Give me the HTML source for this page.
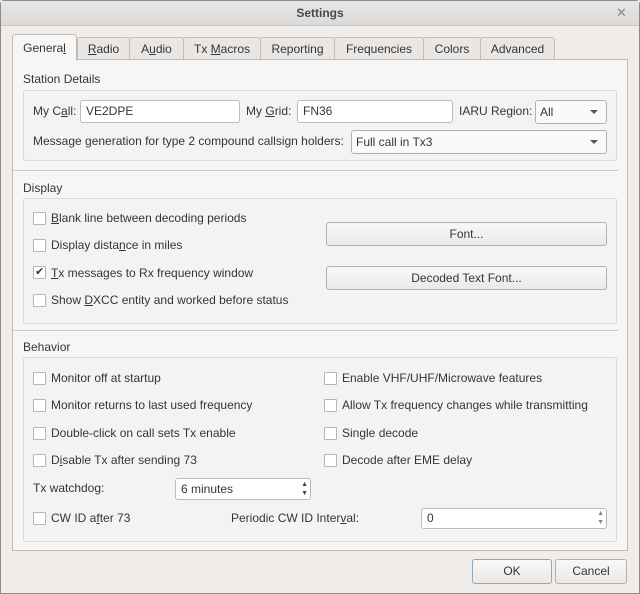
<!DOCTYPE html>
<html><head><style>
*{box-sizing:border-box;margin:0;padding:0}
body{width:640px;height:594px;background:#efecea;font-family:"Liberation Sans","DejaVu Sans",sans-serif;font-size:12px;color:#31363b;position:relative;overflow:hidden}
.a{position:absolute;white-space:nowrap}
.win{position:absolute;left:0;top:0;width:640px;height:594px;border:1px solid #8e8c8a;border-radius:4px 4px 0 0}
.title{position:absolute;left:1px;top:1px;width:638px;height:25px;background:linear-gradient(#e8e6e4,#dcdad8);border-bottom:1px solid #c9c6c3;text-align:center;font-weight:bold;line-height:25px;font-size:12px;color:#45494d}
.tab{position:absolute;top:37px;height:23px;border:1px solid #c0bdba;border-bottom:none;background:#e9e6e3;border-radius:3px 3px 0 0;text-align:center;line-height:22px}
.panel{position:absolute;left:12px;top:59px;width:616px;height:492px;border:1px solid #bdbab7;background:#f8f6f4}
.grp{position:absolute;left:23px;width:594px;border:1px solid #dedbd8;border-radius:2px;background:#f5f3f1}
.inp{position:absolute;height:23px;border:1px solid #bdbab7;border-radius:3px;background:#fff;padding-left:5px;line-height:21px}
.cb{position:absolute;width:13px;height:13px;border:1px solid #b8b5b2;background:#fff;border-radius:1px}
.btn{position:absolute;height:24px;border:1px solid #b3b0ad;border-radius:3px;background:linear-gradient(#f9f8f7,#ebe9e7);text-align:center;line-height:22px}
.sep{position:absolute;left:12px;width:606px;height:1px;background:#cbc8c5}
.arr{position:absolute;right:8px;top:9px;width:0;height:0;border-left:4px solid transparent;border-right:4px solid transparent;border-top:4px solid #555}
u{text-decoration:underline}
</style></head><body>
<div class="win"></div>
<div class="title">Settings</div>
<div class="a" style="left:616px;top:5px;font-size:13px;color:#888">✕</div>

<div class="tab" style="left:77px;width:53px"><u>R</u>adio</div>
<div class="tab" style="left:129px;width:55px">A<u>u</u>dio</div>
<div class="tab" style="left:183px;width:78px">Tx <u>M</u>acros</div>
<div class="tab" style="left:260px;width:75px">Reportin<u>g</u></div>
<div class="tab" style="left:334px;width:90px">Frequencies</div>
<div class="tab" style="left:423px;width:58px">Colors</div>
<div class="tab" style="left:480px;width:75px">Advanced</div>
<div class="panel"></div>
<div class="tab" style="left:12px;top:34px;height:27px;width:65px;background:#f8f6f4;border-color:#bdbab7;line-height:27px">Genera<u>l</u></div>

<div class="a" style="left:23px;top:72px">Station Details</div>
<div class="grp" style="top:90px;height:71px"></div>
<div class="a" style="left:33px;top:104px">My C<u>a</u>ll:</div>
<div class="inp" style="left:80px;top:100px;width:160px">VE2DPE</div>
<div class="a" style="left:246px;top:104px">My <u>G</u>rid:</div>
<div class="inp" style="left:297px;top:100px;width:156px">FN36</div>
<div class="a" style="left:459px;top:104px">IARU Region:</div>
<div class="btn" style="left:535px;top:100px;width:72px;text-align:left;padding-left:4px;background:#fbfaf9">All<span class="arr"></span></div>
<div class="a" style="left:33px;top:134px">Message generation for type 2 compound callsign holders:</div>
<div class="btn" style="left:351px;top:130px;width:256px;text-align:left;padding-left:4px;background:#fbfaf9">Full call in Tx3<span class="arr"></span></div>

<div class="sep" style="top:170px"></div>
<div class="a" style="left:23px;top:181px">Display</div>
<div class="grp" style="top:198px;height:126px"></div>
<div class="cb" style="left:33px;top:212px"></div><div class="a" style="left:51px;top:211px"><u>B</u>lank line between decoding periods</div>
<div class="cb" style="left:33px;top:239px"></div><div class="a" style="left:51px;top:238px">Display dista<u>n</u>ce in miles</div>
<div class="cb" style="left:33px;top:266px"></div><div class="a" style="left:35px;top:265px;font-size:11px">✔</div><div class="a" style="left:51px;top:266px"><u>T</u>x messages to Rx frequency window</div>
<div class="cb" style="left:33px;top:294px"></div><div class="a" style="left:51px;top:293px">Show <u>D</u>XCC entity and worked before status</div>
<div class="btn" style="left:326px;top:222px;width:281px">Font...</div>
<div class="btn" style="left:326px;top:266px;width:281px">Decoded Text Font...</div>

<div class="sep" style="top:330px"></div>
<div class="a" style="left:23px;top:340px">Behavior</div>
<div class="grp" style="top:357px;height:185px"></div>
<div class="cb" style="left:33px;top:372px"></div><div class="a" style="left:51px;top:371px">Monitor off at startup</div>
<div class="cb" style="left:33px;top:399px"></div><div class="a" style="left:51px;top:398px">Monitor returns to last used frequency</div>
<div class="cb" style="left:33px;top:427px"></div><div class="a" style="left:51px;top:426px">Double-click on call sets Tx enable</div>
<div class="cb" style="left:33px;top:454px"></div><div class="a" style="left:51px;top:453px">D<u>i</u>sable Tx after sending 73</div>
<div class="cb" style="left:324px;top:372px"></div><div class="a" style="left:342px;top:371px">Enable VHF/UHF/Microwave features</div>
<div class="cb" style="left:324px;top:399px"></div><div class="a" style="left:342px;top:398px">Allow Tx frequency changes while transmitting</div>
<div class="cb" style="left:324px;top:427px"></div><div class="a" style="left:342px;top:426px">Single decode</div>
<div class="cb" style="left:324px;top:454px"></div><div class="a" style="left:342px;top:453px">Decode after EME delay</div>
<div class="a" style="left:33px;top:481px">Tx watchdog:</div>
<div class="inp" style="left:175px;top:478px;width:136px;height:22px;line-height:20px">6 minutes<span class="a" style="right:2px;top:1px;font-size:7px;line-height:9px;color:#444">▲<br>▼</span></div>
<div class="cb" style="left:33px;top:512px"></div><div class="a" style="left:51px;top:511px">CW ID a<u>f</u>ter 73</div>
<div class="a" style="left:231px;top:511px">Periodic CW ID Inter<u>v</u>al:</div>
<div class="inp" style="left:421px;top:508px;width:186px;height:21px;line-height:19px">0<span class="a" style="right:2px;top:0px;font-size:7px;line-height:9px;color:#888">▲<br>▼</span></div>

<div class="btn" style="left:472px;top:559px;width:80px;height:25px;border-color:#8fa8c2;line-height:23px">OK</div>
<div class="btn" style="left:555px;top:559px;width:72px;height:25px;line-height:23px">Cancel</div>
</body></html>
